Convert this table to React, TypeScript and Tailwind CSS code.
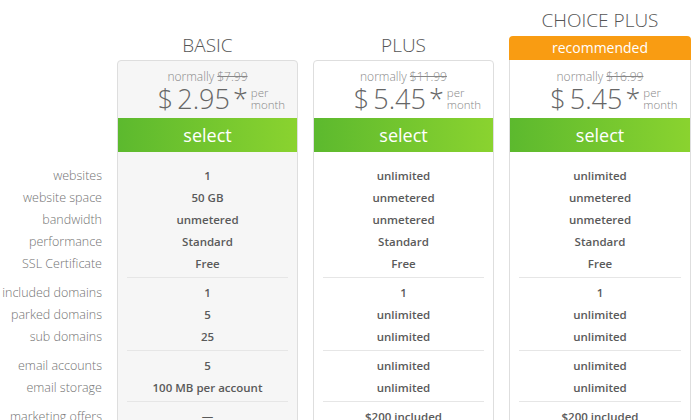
import React from "react";

type Plan = {
  name: string;
  was: string;
  price: string;
  recommended?: boolean;
  shaded?: boolean;
  values: string[][];
};

const labels: string[][] = [
  ["websites", "website space", "bandwidth", "performance", "SSL Certificate"],
  ["included domains", "parked domains", "sub domains"],
  ["email accounts", "email storage"],
  ["marketing offers"],
];

const plans: Plan[] = [
  {
    name: "BASIC",
    was: "$7.99",
    price: "2.95",
    shaded: true,
    values: [
      ["1", "50 GB", "unmetered", "Standard", "Free"],
      ["1", "5", "25"],
      ["5", "100 MB per account"],
      ["—"],
    ],
  },
  {
    name: "PLUS",
    was: "$11.99",
    price: "5.45",
    values: [
      ["unlimited", "unmetered", "unmetered", "Standard", "Free"],
      ["1", "unlimited", "unlimited"],
      ["unlimited", "unlimited"],
      ["$200 included"],
    ],
  },
  {
    name: "CHOICE PLUS",
    was: "$16.99",
    price: "5.45",
    recommended: true,
    values: [
      ["unlimited", "unmetered", "unmetered", "Standard", "Free"],
      ["1", "unlimited", "unlimited"],
      ["unlimited", "unlimited"],
      ["$200 included"],
    ],
  },
];

const font = { fontFamily: '"Open Sans", "Noto Sans", sans-serif' };

const Section = ({
  rows,
  index,
  divider,
  label,
}: {
  rows: string[];
  index: number;
  divider: boolean;
  label?: boolean;
}) => (
  <div className={index === 0 ? "pt-[13px]" : "pt-[4px]"}>
    <div className="pb-[2px]">
      {rows.map((r) => (
        <div
          key={r}
          className={
            label
              ? "h-[22px] leading-[22px] text-right text-[12.5px] font-light text-[#737373] whitespace-nowrap"
              : "h-[22px] leading-[22px] text-center text-[11.5px] font-semibold text-[#5a5a5a] whitespace-nowrap"
          }
        >
          {r}
        </div>
      ))}
    </div>
    <div className={divider ? "mx-[9px] h-px bg-[#e6e6e6]" : "h-px"} />
  </div>
);

const PlanColumn = ({ plan }: { plan: Plan }) => (
  <div className="flex flex-col">
    {plan.recommended ? (
      <div className="h-[60px] flex flex-col">
        <div className="h-[36px] flex items-end justify-center pb-[4px] text-[19px] leading-[24px] font-light text-[#555555]">
          {plan.name}
        </div>
        <div className="h-[24px] rounded-t-[4px] bg-[#f99c12] text-white text-[14px] leading-[24px] text-center">
          recommended
        </div>
      </div>
    ) : (
      <div className="h-[60px] flex items-end justify-center pb-[3px] text-[19px] leading-[24px] font-light text-[#555555]">
        {plan.name}
      </div>
    )}
    <div
      className={
        (plan.recommended ? "border-t-0 " : "rounded-t-[4px] ") +
        (plan.shaded ? "bg-[#f6f6f6] " : "bg-white ") +
        "border border-[#dedede] flex-1"
      }
    >
      <div className={plan.recommended ? "h-[58px] pt-[9px]" : "h-[57px] pt-[8px]"}>
        <div className="text-center text-[12px] leading-[16px] font-light text-[#888888]">
          normally <span className="line-through">{plan.was}</span>
        </div>
        <div className="h-[28px] flex items-center justify-center text-[#666666] pl-[28px]">
          <span className="text-[27px] leading-[28px] font-light">$</span>
          <span className="text-[27px] leading-[28px] font-light ml-[4px]">{plan.price}</span>
          <span className="text-[27px] leading-[28px] font-light ml-[3px]">*</span>
          <span className="ml-[3px] flex flex-col text-[11.5px] leading-[12px] font-light text-[#888888]">
            <span>per</span>
            <span>month</span>
          </span>
        </div>
      </div>
      <div className="h-[34px] bg-gradient-to-r from-[#5cb92e] to-[#8ad32f] text-white text-[18px] leading-[34px] text-center">
        select
      </div>
      {plan.values.map((rows, i) => (
        <Section key={i} rows={rows} index={i} divider={i < plan.values.length - 1} />
      ))}
    </div>
  </div>
);

export default function App() {
  return (
    <div className="w-[700px] h-[420px] overflow-hidden bg-white" style={font}>
      <div className="flex gap-[15px]">
        <div className="w-[117px] -mr-[15px] pr-[15px] flex flex-col shrink-0">
          <div className="h-[152px]" />
          {labels.map((rows, i) => (
            <Section key={i} rows={rows} index={i} divider={false} label />
          ))}
        </div>
        <div className="w-[181px] shrink-0">
          <PlanColumn plan={plans[0]} />
        </div>
        <div className="w-[181px] shrink-0">
          <PlanColumn plan={plans[1]} />
        </div>
        <div className="w-[182px] shrink-0">
          <PlanColumn plan={plans[2]} />
        </div>
      </div>
    </div>
  );
}
